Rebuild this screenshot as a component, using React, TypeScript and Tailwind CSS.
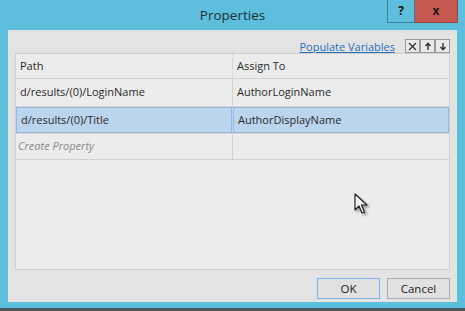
import React from "react";

const FONT = { fontFamily: '"Open Sans", "Noto Sans", sans-serif' };

type Row = { path: string; assign: string; selected?: boolean };

const ROWS: Row[] = [
  { path: "d/results/(0)/LoginName", assign: "AuthorLoginName" },
  { path: "d/results/(0)/Title", assign: "AuthorDisplayName", selected: true },
];

function Cursor() {
  return (
    <svg
      className="absolute left-[354px] top-[193px]"
      width="16"
      height="24"
      viewBox="0 0 16 24"
      style={{ filter: "drop-shadow(2px 2px 1px rgba(0,0,0,0.35))" }}
    >
      <path
        d="M1 1 L1 17 L5 13 L8 20 L10.5 19 L7.5 12 L13 12 Z"
        fill="#f4f4f4"
        stroke="#222"
        strokeWidth="1.2"
        strokeLinejoin="round"
      />
    </svg>
  );
}

function ToolButton({ children }: { children: React.ReactNode }) {
  return (
    <div className="w-[15px] h-[14px] flex items-center justify-center border border-[#9a9a9a] bg-[#e9e9e9] text-[#333]">
      {children}
    </div>
  );
}

export default function App() {
  return (
    <div className="relative w-[465px] h-[311px] bg-[#5ebfdc] overflow-hidden" style={FONT}>
      {/* title bar */}
      <div className="relative h-[30px] flex items-center justify-center">
        <span className="text-[13.5px] text-[#1d2f36]">Properties</span>
        <div className="absolute top-0 left-[387px] flex">
          <div className="w-[28px] h-[23px] border border-t-0 border-[#3b7f97] flex items-center justify-center text-[12px] font-bold text-[#111]">
            ?
          </div>
          <div className="w-[43px] h-[23px] bg-[#c75a50] border-b border-r border-[#9a3f38] flex items-center justify-center text-[12px] font-bold text-[#1a1a1a]">
            x
          </div>
        </div>
      </div>

      {/* client area */}
      <div className="ml-[8px] w-[449px] h-[272px] bg-[#e3e3e3] px-[7px] pt-[9px] flex flex-col">
        <div className="h-[14px] flex items-center justify-end gap-[10px]">
          <span className="text-[11px] text-[#2a6ebb] underline leading-none">Populate Variables</span>
          <div className="flex">
            <ToolButton>
              <svg width="9" height="9" viewBox="0 0 9 9">
                <path d="M1 1 L8 8 M8 1 L1 8" stroke="#333" strokeWidth="1.3" />
              </svg>
            </ToolButton>
            <ToolButton>
              <svg width="8" height="9" viewBox="0 0 8 9">
                <path d="M4 8 L4 2 M1.5 4 L4 1.2 L6.5 4" stroke="#333" strokeWidth="1.4" fill="none" />
              </svg>
            </ToolButton>
            <ToolButton>
              <svg width="8" height="9" viewBox="0 0 8 9">
                <path d="M4 1 L4 7 M1.5 5 L4 7.8 L6.5 5" stroke="#333" strokeWidth="1.4" fill="none" />
              </svg>
            </ToolButton>
          </div>
        </div>

        {/* grid */}
        <div className="h-[217px] bg-[#ececec] border border-[#cfcfcf] text-[11px] text-[#2a2a2a]">
          <div className="h-[25px] grid grid-cols-[217px_1fr] border-b border-[#d2d2d2]">
            <div className="px-[4px] flex items-center border-r border-[#d8d8d8]">Path</div>
            <div className="px-[4px] flex items-center">Assign To</div>
          </div>
          {ROWS.map((r) =>
            r.selected ? (
              <div key={r.path} className="h-[27px] grid grid-cols-[217px_1fr] bg-[#bcd5ee] border-b border-[#d2d2d2]">
                <div className="px-[4px] flex items-center border border-[#94b8de] mr-[1px]">{r.path}</div>
                <div className="px-[4px] flex items-center border border-[#94b8de]">{r.assign}</div>
              </div>
            ) : (
              <div key={r.path} className="h-[28px] grid grid-cols-[217px_1fr] border-b border-[#d2d2d2]">
                <div className="px-[4px] flex items-center border-r border-[#d2d2d2]">{r.path}</div>
                <div className="px-[4px] flex items-center">{r.assign}</div>
              </div>
            )
          )}
          <div className="h-[26px] grid grid-cols-[217px_1fr] border-b border-[#d2d2d2]">
            <div className="px-[2px] flex items-center border-r border-[#d2d2d2] italic text-[#8a8a8a]">
              Create Property
            </div>
            <div />
          </div>
        </div>

        {/* buttons */}
        <div className="mt-[8px] flex justify-end gap-[7px]">
          <button className="w-[63px] h-[21px] bg-[#e1e1e1] border border-[#7eb4ea] text-[11.5px] text-[#222]">
            OK
          </button>
          <button className="w-[63px] h-[21px] bg-[#e1e1e1] border border-[#acacac] text-[11.5px] text-[#222]">
            Cancel
          </button>
        </div>
      </div>

      {/* taskbar strip */}
      <div className="absolute left-0 right-0 bottom-0 h-[3px] bg-[#4a5660]" />
      <Cursor />
    </div>
  );
}
